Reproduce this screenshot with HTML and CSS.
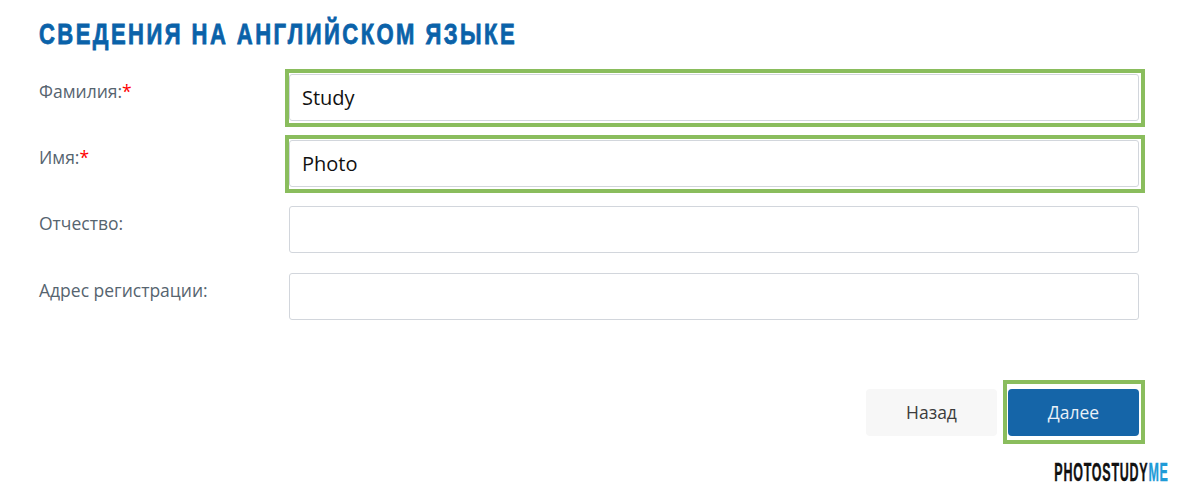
FILE: index.html
```html
<!DOCTYPE html>
<html lang="ru">
  <head>
    <meta charset="UTF-8" />
    <title>Сведения на английском языке</title>
    <link rel="stylesheet" href="styles.css">
  </head>
  <body>
    <main class="page">
      <h1 class="title">Сведения на английском языке</h1>

      <form class="fields">
        <div class="row">
          <label class="label">Фамилия:<span class="req">*</span></label>
          <div class="control marked">
            <input class="input" type="text" value="Study" />
          </div>
        </div>
        <div class="row">
          <label class="label">Имя:<span class="req">*</span></label>
          <div class="control marked">
            <input class="input" type="text" value="Photo" />
          </div>
        </div>
        <div class="row">
          <label class="label">Отчество:</label>
          <div class="control">
            <input class="input" type="text" />
          </div>
        </div>
        <div class="row">
          <label class="label">Адрес регистрации:</label>
          <div class="control">
            <input class="input" type="text" />
          </div>
        </div>
      </form>

      <div class="actions">
        <button class="btn btn-back" type="button">Назад</button>
        <div class="marked marked-btn">
          <button class="btn btn-next" type="button">Далее</button>
        </div>
      </div>
    </main>
    <div class="watermark">PHOTOSTUDY<span class="watermark-me">ME</span></div>
  </body>
</html>
```

FILE: styles.css
```css
html,
body {
  margin: 0;
  height: 495px;
  overflow: hidden;
  background: #fff;
}
body {
  position: relative;
  font-family: "Open Sans", sans-serif;
}
.page {
  width: 1100px;
  padding-left: 39px;
}
.title {
  margin: 0 0 22.8px;
  padding-top: 17px;
  height: 34px;
  line-height: 34px;
  font-family: "Liberation Sans", sans-serif;
  font-size: 29px;
  font-weight: 700;
  letter-spacing: 3.2px;
  text-transform: uppercase;
  white-space: nowrap;
  color: #0a62a9;
  -webkit-text-stroke: 0.8px #0a62a9;
  transform: scaleX(0.76);
  transform-origin: left center;
}
.fields {
  display: flex;
  flex-direction: column;
  gap: 19.3px;
}
.row {
  display: flex;
}
.label {
  width: 250px;
  padding-top: 6px;
  line-height: 22px;
  font-size: 17.5px;
  color: #56646f;
}
.req {
  color: #ff0000;
}
.control {
  flex: 1;
}
.input {
  display: block;
  box-sizing: border-box;
  width: 100%;
  height: 47px;
  padding: 0 12px;
  border: 1px solid #d2d6dc;
  border-radius: 3px;
  font-family: "Open Sans", sans-serif;
  font-size: 20px;
  color: #111;
  background: #fff;
}
.marked {
  position: relative;
}
.marked::after {
  content: "";
  position: absolute;
  top: -5px;
  right: -6px;
  bottom: -6px;
  left: -4px;
  border: 4px solid #8abd5d;
  pointer-events: none;
}
.marked-btn::after {
  top: -9px;
  right: -6px;
  bottom: -8px;
  left: -5px;
}
.actions {
  display: flex;
  justify-content: flex-end;
  gap: 11px;
  margin-top: 69px;
}
.btn {
  display: block;
  width: 131px;
  height: 47px;
  border: 0;
  border-radius: 4px;
  font-family: "Open Sans", sans-serif;
  font-size: 17.5px;
}
.btn-back {
  background: #f7f7f7;
  color: #3c3c3c;
}
.btn-next {
  background: #1565a8;
  color: #e8f0f7;
}
.watermark {
  position: absolute;
  right: 15px;
  top: 458px;
  line-height: 28px;
  font-family: "Liberation Sans", sans-serif;
  font-size: 25px;
  font-weight: 700;
  letter-spacing: 1.5px;
  color: #111;
  -webkit-text-stroke: 0.4px #111;
  white-space: nowrap;
  transform: scaleX(0.5);
  transform-origin: right center;
}
.watermark-me {
  color: #1f9bd7;
  -webkit-text-stroke-color: #1f9bd7;
}
```
